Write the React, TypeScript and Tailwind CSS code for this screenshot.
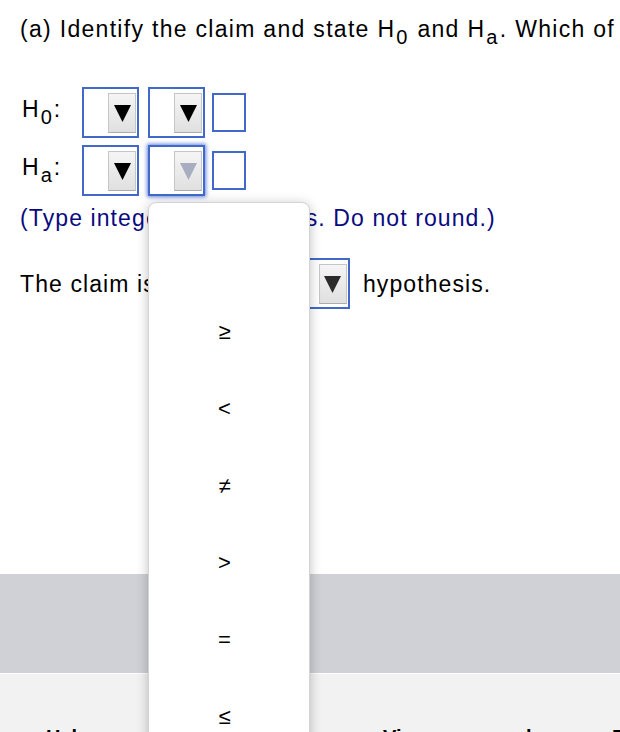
import React from "react";

const font = "font-['Liberation_Sans',Arial,sans-serif]";

function Tri({ color = "#000" }: { color?: string }) {
  return (
    <svg width="17" height="18" viewBox="0 0 17 18">
      <polygon points="0,1 17,1 8.5,18" fill={color} />
    </svg>
  );
}

function SelBox({
  w = 57,
  focused = false,
  triColor = "#000",
}: {
  w?: number;
  focused?: boolean;
  triColor?: string;
}) {
  return (
    <div
      className={`flex h-[51px] items-center justify-end border-2 border-[#4169c9] bg-white pr-[1px] ${
        focused ? "shadow-[0_0_4px_1px_rgba(50,90,210,0.75)]" : ""
      }`}
      style={{ width: w }}
    >
      <div className="flex h-[40px] w-[28px] items-center justify-center border border-[#c6c6c6] border-b-[#acacac] bg-gradient-to-b from-[#f5f5f5] to-[#e0e0e0]">
        <Tri color={triColor} />
      </div>
    </div>
  );
}

function SmallBox() {
  return <div className="h-[39px] w-[34px] border-2 border-[#4169c9] bg-white" />;
}

function Sub({ children }: { children: React.ReactNode }) {
  return <span className="relative top-[7px] px-[1px] text-[20px] leading-none">{children}</span>;
}

function Label({ sub }: { sub: string }) {
  return (
    <div className="mb-[8px] w-[62px] pl-[2px] text-[23px] leading-[28px] tracking-[1px]">
      H<Sub>{sub}</Sub>:
    </div>
  );
}

export default function App() {
  const items = ["", "≥", "<", "≠", ">", "=", "≤"];
  return (
    <div className={`${font} relative h-[732px] w-[620px] overflow-hidden bg-white text-black`}>
      <div className="h-[574px] px-[20px] pt-[15px]">
        <div className="whitespace-nowrap text-[23px] leading-[28px] tracking-[1.3px]">
          (a) Identify the claim and state H<Sub>0</Sub> and H<Sub>a</Sub>. Which of
        </div>

        <div className="mt-[44px] flex flex-col gap-[7px]">
          <div className="flex items-center">
            <Label sub="0" />
            <SelBox />
            <div className="w-[9px]" />
            <SelBox />
            <div className="w-[7px]" />
            <SmallBox />
          </div>
          <div className="flex items-center">
            <Label sub="a" />
            <SelBox />
            <div className="w-[9px]" />
            <SelBox focused triColor="#a8aec0" />
            <div className="w-[7px]" />
            <SmallBox />
          </div>
        </div>

        <div className="mt-[8px] whitespace-nowrap text-[23px] leading-[28px] tracking-[1.1px] text-[#0a0a80]">
          (Type integers or decimals. Do not round.)
        </div>

        <div className="mt-[26px] flex items-center whitespace-nowrap text-[23px] leading-[28px] tracking-[1.1px]">
          <span>The claim is</span>
          <div className="ml-[8px]">
            <SelBox w={186} triColor="#2b2b2b" />
          </div>
          <span className="ml-[13px]">hypothesis.</span>
        </div>
      </div>

      <div className="h-[99px] bg-[#cfd1d6]" />
      <div className="h-px bg-white" />
      <div className="flex h-[80px] whitespace-nowrap bg-[#f2f2f2] pt-[52px] text-[20px] font-bold leading-[22px]">
        <span className="ml-[46px] w-[337px] shrink-0">Help me solve this</span>
        <span className="w-[229px] shrink-0">View an example</span>
        <span className="shrink-0">Explain</span>
      </div>

      <div className="absolute left-[148px] top-[202px] h-[560px] w-[162px] rounded-[8px] border border-[#d4d4d4] bg-white shadow-[0_2px_12px_rgba(0,0,0,0.25)]">
        <div className="flex flex-col pt-[13px] pr-[9px]">
          {items.map((s, i) => (
            <div key={i} className="flex h-[77px] items-center justify-center text-[22px]">
              {s}
            </div>
          ))}
        </div>
      </div>
    </div>
  );
}
